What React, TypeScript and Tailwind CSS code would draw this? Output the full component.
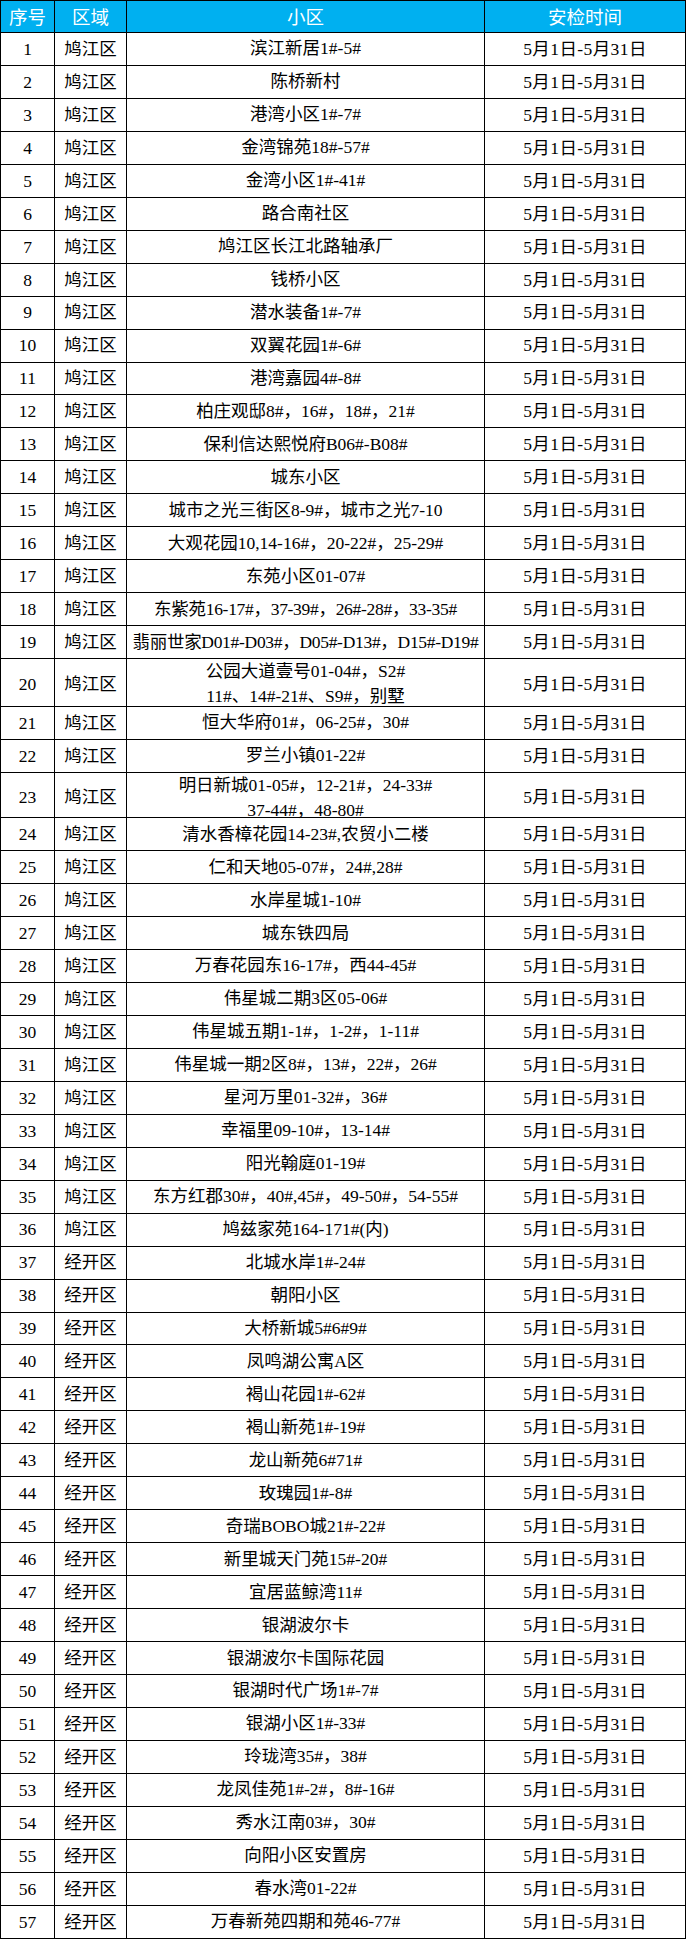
const rows: [string, string, string[], string?][] = [
  ['1', '鸠江区', ['滨江新居1#-5#']],
  ['2', '鸠江区', ['陈桥新村']],
  ['3', '鸠江区', ['港湾小区1#-7#']],
  ['4', '鸠江区', ['金湾锦苑18#-57#']],
  ['5', '鸠江区', ['金湾小区1#-41#']],
  ['6', '鸠江区', ['路合南社区']],
  ['7', '鸠江区', ['鸠江区长江北路轴承厂']],
  ['8', '鸠江区', ['钱桥小区']],
  ['9', '鸠江区', ['潜水装备1#-7#']],
  ['10', '鸠江区', ['双翼花园1#-6#']],
  ['11', '鸠江区', ['港湾嘉园4#-8#']],
  ['12', '鸠江区', ['柏庄观邸8#，16#，18#，21#']],
  ['13', '鸠江区', ['保利信达熙悦府B06#-B08#']],
  ['14', '鸠江区', ['城东小区']],
  ['15', '鸠江区', ['城市之光三街区8-9#，城市之光7-10']],
  ['16', '鸠江区', ['大观花园10,14-16#，20-22#，25-29#']],
  ['17', '鸠江区', ['东苑小区01-07#']],
  ['18', '鸠江区', ['东紫苑16-17#，37-39#，26#-28#，33-35#']],
  ['19', '鸠江区', ['翡丽世家D01#-D03#，D05#-D13#，D15#-D19#']],
  ['20', '鸠江区', ['公园大道壹号01-04#，S2#', '11#、14#-21#、S9#，别墅'], 'h-[47.6px]'],
  ['21', '鸠江区', ['恒大华府01#，06-25#，30#']],
  ['22', '鸠江区', ['罗兰小镇01-22#']],
  ['23', '鸠江区', ['明日新城01-05#，12-21#，24-33#', '37-44#，48-80#'], 'h-[45.6px]'],
  ['24', '鸠江区', ['清水香樟花园14-23#,农贸小二楼']],
  ['25', '鸠江区', ['仁和天地05-07#，24#,28#']],
  ['26', '鸠江区', ['水岸星城1-10#']],
  ['27', '鸠江区', ['城东铁四局']],
  ['28', '鸠江区', ['万春花园东16-17#，西44-45#']],
  ['29', '鸠江区', ['伟星城二期3区05-06#']],
  ['30', '鸠江区', ['伟星城五期1-1#，1-2#，1-11#']],
  ['31', '鸠江区', ['伟星城一期2区8#，13#，22#，26#']],
  ['32', '鸠江区', ['星河万里01-32#，36#']],
  ['33', '鸠江区', ['幸福里09-10#，13-14#']],
  ['34', '鸠江区', ['阳光翰庭01-19#']],
  ['35', '鸠江区', ['东方红郡30#，40#,45#，49-50#，54-55#']],
  ['36', '鸠江区', ['鸠兹家苑164-171#(内)']],
  ['37', '经开区', ['北城水岸1#-24#']],
  ['38', '经开区', ['朝阳小区']],
  ['39', '经开区', ['大桥新城5#6#9#']],
  ['40', '经开区', ['凤鸣湖公寓A区']],
  ['41', '经开区', ['褐山花园1#-62#']],
  ['42', '经开区', ['褐山新苑1#-19#']],
  ['43', '经开区', ['龙山新苑6#71#']],
  ['44', '经开区', ['玫瑰园1#-8#']],
  ['45', '经开区', ['奇瑞BOBO城21#-22#']],
  ['46', '经开区', ['新里城天门苑15#-20#']],
  ['47', '经开区', ['宜居蓝鲸湾11#']],
  ['48', '经开区', ['银湖波尔卡']],
  ['49', '经开区', ['银湖波尔卡国际花园']],
  ['50', '经开区', ['银湖时代广场1#-7#']],
  ['51', '经开区', ['银湖小区1#-33#']],
  ['52', '经开区', ['玲珑湾35#，38#']],
  ['53', '经开区', ['龙凤佳苑1#-2#，8#-16#']],
  ['54', '经开区', ['秀水江南03#，30#']],
  ['55', '经开区', ['向阳小区安置房']],
  ['56', '经开区', ['春水湾01-22#']],
  ['57', '经开区', ['万春新苑四期和苑46-77#']],
]

const cell = 'flex items-center justify-center border-r border-black'

const App = () => {
  return (
    <div className="w-[686px] bg-white">
      <div className="border-l border-t border-black">
        {/* header */}
        <div
          className="grid grid-cols-[54px_72px_358px_201px] h-[32px] border-b border-black bg-[#00b0f0] text-white text-[18.5px]"
          style={{ fontFamily: '"Noto Sans CJK SC", sans-serif' }}
        >
          <div className={cell}>序号</div>
          <div className={cell}>区域</div>
          <div className={cell}>小区</div>
          <div className={cell}>安检时间</div>
        </div>

        {/* body */}
        <div
          className="text-black text-[17.5px]"
          style={{ fontFamily: '"Liberation Serif", "Noto Sans CJK SC", serif' }}
        >
          {rows.map(([no, area, name, h]) => (
            <div
              key={no}
              className={`grid grid-cols-[54px_72px_358px_201px] border-b border-black ${h ?? 'h-[32.96px]'}`}
            >
              <div className={cell}>{no}</div>
              <div className={cell}>{area}</div>
              <div
                className={`${cell} flex-col leading-[25px] whitespace-nowrap ${
                  name[0].length > 30 ? 'tracking-[-0.3px]' : ''
                }`}
              >
                {name.map((line) => (
                  <span key={line}>{line}</span>
                ))}
              </div>
              <div className={`${cell} tracking-[0.4px]`}>5月1日-5月31日</div>
            </div>
          ))}
        </div>
      </div>
    </div>
  )
}

export default App
